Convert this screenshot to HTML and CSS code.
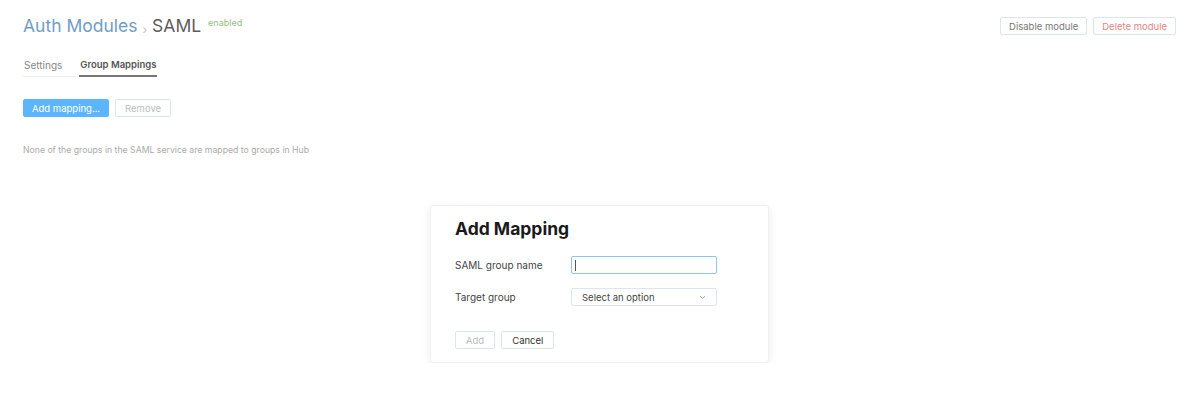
FILE: index.html
```html
<!DOCTYPE html>
<html lang="en">
<head>
    <meta charset="UTF-8">
    <title>Auth Modules - SAML</title>
    <link rel="stylesheet" href="styles.css">
</head>
<body>
    <div class="page">
        <div class="page-header">
            <h1 class="title">
                <a class="crumb" href="#">Auth Modules</a>
                <span class="sep">›</span>
                <span class="current">SAML</span>
                <span class="status">enabled</span>
            </h1>
            <div class="header-actions">
                <button class="btn">Disable module</button>
                <button class="btn btn-danger">Delete module</button>
            </div>
        </div>

        <div class="tabs">
            <span class="tab">Settings</span>
            <span class="tab active">Group Mappings</span>
        </div>

        <div class="toolbar">
            <button class="btn btn-primary">Add mapping...</button>
            <button class="btn" disabled>Remove</button>
        </div>

        <p class="empty">None of the groups in the SAML service are mapped to groups in Hub</p>

        <div class="dialog-wrap">
            <div class="dialog">
                <h2>Add Mapping</h2>
                <div class="field">
                    <label for="saml-group">SAML group name</label>
                    <div class="input focused" id="saml-group"><span class="caret"></span></div>
                </div>
                <div class="field">
                    <label>Target group</label>
                    <div class="input select">
                        <span>Select an option</span>
                        <svg width="7" height="5" viewBox="0 0 7 5"><path d="M1 1.2 L3.5 3.6 L6 1.2" fill="none" stroke="#999" stroke-width="0.9"/></svg>
                    </div>
                </div>
                <div class="dialog-actions">
                    <button class="btn" disabled>Add</button>
                    <button class="btn btn-dark">Cancel</button>
                </div>
            </div>
        </div>
    </div>
</body>
</html>
```

FILE: styles.css
```css
body {
    margin: 0;
    font-family: Inter, "Noto Sans", sans-serif;
    background: #fff;
    color: #444;
}
.page {
    padding: 14px 21px 0 23px;
}
.page-header {
    display: flex;
    justify-content: space-between;
    align-items: flex-start;
}
.title {
    margin: 0;
    font-size: 17.5px;
    font-weight: 400;
    line-height: 24px;
    display: flex;
    align-items: flex-start;
}
.crumb {
    color: #6f9cc6;
    text-decoration: none;
}
.sep {
    color: #c4c4c4;
    font-size: 12px;
    margin: 4px 5px 0 5px;
}
.current {
    color: #5c5c5c;
}
.status {
    font-size: 9px;
    color: #8fbf80;
    margin: -3px 0 0 7px;
}
.header-actions {
    display: flex;
    gap: 6px;
    margin-top: 3px;
}
.btn {
    font-family: inherit;
    font-size: 9.5px;
    height: 18px;
    padding: 0 8px;
    border: 1px solid #dce5ef;
    border-radius: 2px;
    background: #fff;
    color: #777;
}
.btn:disabled {
    color: #bbb;
}
.btn-danger {
    color: #e28585;
}
.btn-dark {
    color: #333;
}
.btn-primary {
    background: #5db6fb;
    border-color: #5db6fb;
    color: #fff;
}
.tabs {
    display: flex;
    margin-top: 17px;
    font-size: 10px;
}
.tab {
    padding: 0 1px 5px;
    margin-right: 16px;
    color: #888;
    border-bottom: 1px solid #eee;
    line-height: 12px;
}
.tab:first-child {
    padding-left: 1px;
    padding-right: 14px;
    margin-right: 3px;
}
.tab.active {
    color: #555;
    font-size: 9.5px;
    font-weight: 600;
    border-bottom: 2px solid #777;
    padding-bottom: 3px;
}
.toolbar {
    display: flex;
    gap: 6px;
    margin-top: 22px;
}
.toolbar .btn:disabled {
    padding: 0 9px;
}
.empty {
    margin: 28px 0 0;
    font-size: 8.7px;
    color: #aaa;
}
.dialog-wrap {
    display: flex;
    justify-content: center;
    margin-top: 50px;
}
.dialog {
    width: 339px;
    box-sizing: border-box;
    padding: 12px 24px 13px;
    background: #fff;
    border: 1px solid #eef0f3;
    border-radius: 3px;
    box-shadow: 0 2px 10px rgba(0, 0, 0, 0.08);
}
.dialog h2 {
    margin: 0 0 16px;
    font-size: 17.5px;
    font-weight: 700;
    color: #1a1a1a;
    line-height: 22px;
}
.field {
    display: flex;
    align-items: center;
    margin-bottom: 14px;
    font-size: 10px;
}
.field label {
    width: 116px;
    color: #444;
}
.input {
    width: 146px;
    height: 18px;
    box-sizing: border-box;
    border: 1px solid #dce5ef;
    border-radius: 2px;
    display: flex;
    align-items: center;
    padding: 0 10px;
    font-size: 9.5px;
    color: #444;
}
.input.focused {
    border-color: #8cc6f4;
    padding-left: 3px;
}
.caret {
    width: 1px;
    height: 11px;
    background: #555;
}
.select {
    justify-content: space-between;
}
.dialog-actions {
    display: flex;
    gap: 6px;
    margin-top: 25px;
}
.dialog-actions .btn {
    padding: 0 10px;
}
```
